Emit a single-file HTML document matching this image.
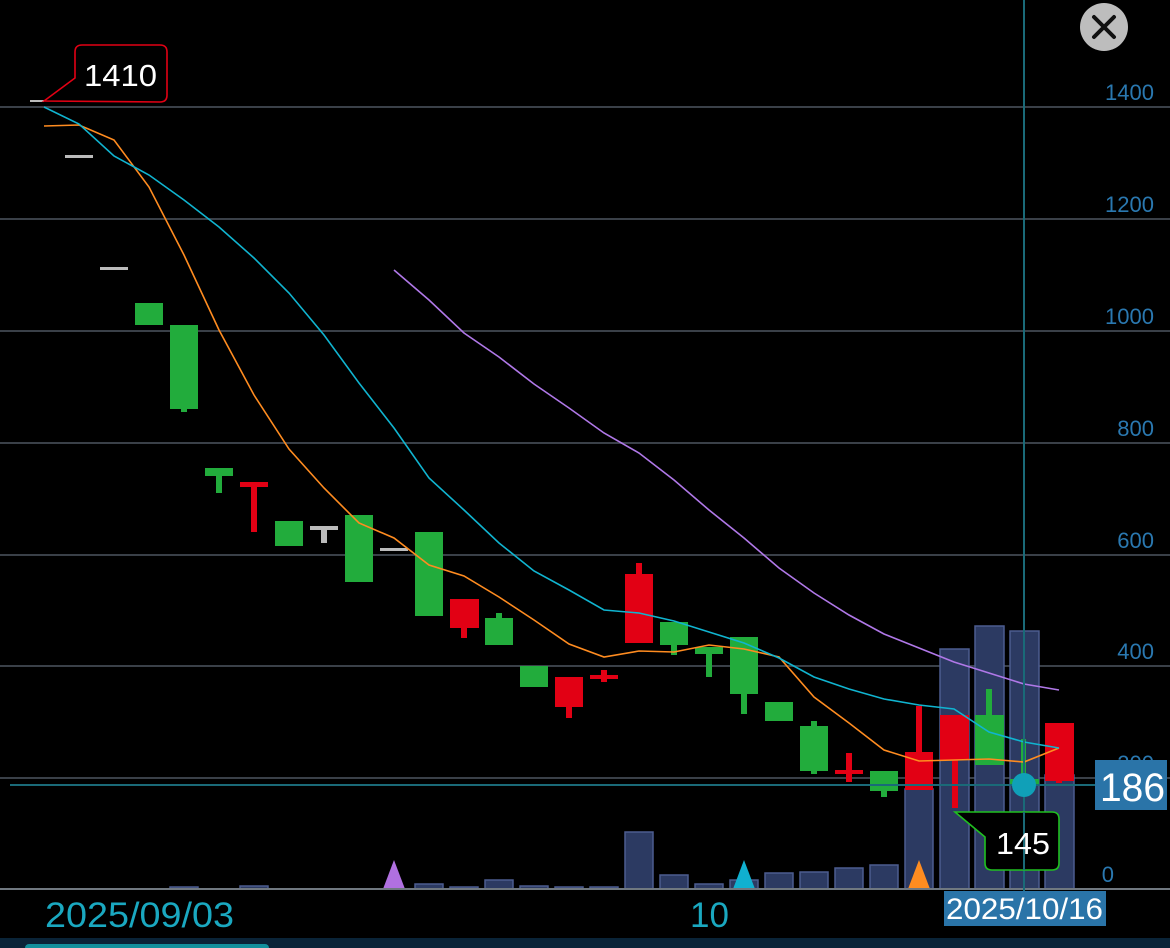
<!DOCTYPE html><html><head><meta charset="utf-8"><style>html,body{margin:0;padding:0;background:#000;overflow:hidden}svg{display:block}text{font-family:"Liberation Sans",sans-serif}</style></head><body>
<svg width="1170" height="948" viewBox="0 0 1170 948">
<rect width="1170" height="948" fill="#000"/>
<g stroke="#3a4048" stroke-width="2">
<line x1="0" y1="107" x2="1170" y2="107"/><line x1="0" y1="219" x2="1170" y2="219"/><line x1="0" y1="331" x2="1170" y2="331"/><line x1="0" y1="443" x2="1170" y2="443"/><line x1="0" y1="555" x2="1170" y2="555"/><line x1="0" y1="666" x2="1170" y2="666"/><line x1="0" y1="778" x2="1170" y2="778"/></g>
<g font-size="22" text-anchor="end">
<text x="1154" y="100" fill="#2a78b0">1400</text><text x="1154" y="212" fill="#2a78b0">1200</text><text x="1154" y="324" fill="#2a78b0">1000</text><text x="1154" y="436" fill="#2a78b0">800</text><text x="1154" y="548" fill="#2a78b0">600</text><text x="1154" y="659" fill="#2a78b0">400</text><text x="1154" y="771" fill="#2a78b0">200</text><text x="1114" y="882" fill="#2a78b0">0</text></g>
<g fill="#2c3a62" stroke="#4c5c90" stroke-width="1.5">
<rect x="170" y="887" width="28" height="2"/><rect x="240" y="886" width="28" height="3"/><rect x="415" y="884" width="28" height="5"/><rect x="450" y="887" width="28" height="2"/><rect x="485" y="880" width="28" height="9"/><rect x="520" y="886" width="28" height="3"/><rect x="555" y="887" width="28" height="2"/><rect x="590" y="887" width="28" height="2"/>
<rect x="625" y="832" width="28" height="57"/><rect x="660" y="875" width="28" height="14"/><rect x="695" y="884" width="28" height="5"/><rect x="730" y="880" width="28" height="9"/><rect x="765" y="873" width="28" height="16"/><rect x="800" y="872" width="28" height="17"/><rect x="835" y="868" width="28" height="21"/><rect x="870" y="865" width="28" height="24"/>
<rect x="905" y="789" width="28" height="100"/><rect x="940" y="649" width="29" height="240"/><rect x="975" y="626" width="29" height="263"/><rect x="1010" y="631" width="29" height="258"/><rect x="1045" y="775" width="29" height="114"/></g>
<polygon points="383,889 394,860 405,889" fill="#b070e0"/><polygon points="733,889 744,860 755,889" fill="#10b0d0"/><polygon points="908,889 919,860 930,889" fill="#ff8c20"/>
<line x1="0" y1="889" x2="1170" y2="889" stroke="#707880" stroke-width="2"/>
<g fill="#bbb"><rect x="30" y="100" width="14" height="2"/><rect x="65" y="155" width="28" height="3"/><rect x="100" y="267" width="28" height="3"/><rect x="310" y="526" width="28" height="4"/><rect x="321" y="526" width="6" height="17"/><rect x="380" y="548" width="28" height="3"/></g>
<g fill="#22ac3c">
<rect x="135" y="303" width="28" height="22"/><rect x="170" y="325" width="28" height="84"/><rect x="181" y="405" width="6" height="7"/>
<rect x="205" y="468" width="28" height="8"/><rect x="216" y="468" width="6" height="25"/>
<rect x="275" y="521" width="28" height="25"/><rect x="345" y="515" width="28" height="67"/><rect x="415" y="532" width="28" height="84"/>
<rect x="485" y="618" width="28" height="27"/><rect x="496" y="613" width="6" height="8"/><rect x="520" y="666" width="28" height="21"/>
<rect x="660" y="622" width="28" height="23"/><rect x="671" y="640" width="6" height="15"/><rect x="695" y="647" width="28" height="7"/><rect x="706" y="647" width="6" height="30"/>
<rect x="730" y="637" width="28" height="57"/><rect x="741" y="690" width="6" height="24"/><rect x="765" y="702" width="28" height="19"/>
<rect x="800" y="726" width="28" height="45"/><rect x="811" y="721" width="6" height="53"/><rect x="870" y="771" width="28" height="20"/><rect x="881" y="785" width="6" height="12"/>
<rect x="975" y="715" width="29" height="50"/><rect x="986" y="689" width="6" height="30"/><rect x="1021" y="739" width="5" height="46"/><rect x="1010" y="779" width="29" height="6"/></g>
<g fill="#e20014">
<rect x="240" y="482" width="28" height="5"/><rect x="251" y="482" width="6" height="50"/>
<rect x="450" y="599" width="29" height="29"/><rect x="461" y="620" width="6" height="18"/><rect x="555" y="677" width="28" height="30"/><rect x="566" y="700" width="6" height="18"/>
<rect x="590" y="675" width="28" height="4"/><rect x="601" y="670" width="6" height="12"/>
<rect x="625" y="574" width="28" height="69"/><rect x="636" y="563" width="6" height="15"/>
<rect x="835" y="770" width="28" height="4"/><rect x="846" y="753" width="6" height="29"/>
<rect x="905" y="752" width="28" height="38"/><rect x="916" y="706" width="6" height="50"/>
<rect x="940" y="715" width="29" height="45"/><rect x="952" y="755" width="6" height="53"/>
<rect x="1045" y="723" width="29" height="58"/><rect x="1056" y="775" width="6" height="8"/></g>
<polyline fill="none" stroke="#ff8c20" stroke-width="1.6" points="44,126 79,125 114,140 149,187 184,255 219,330 254,395 289,449 324,488 359,523 394,538 429,565 464,576 499,597 534,620 569,644 604,657 639,651 674,652 709,645 744,649 779,657 814,697 849,723 884,750 919,761 954,760 989,759 1024,762 1059,748"/>
<polyline fill="none" stroke="#10b4d0" stroke-width="1.6" points="44,107 79,124 114,156 149,175 184,200 219,227 254,258 289,293 324,335 359,383 394,428 429,478 464,510 499,543 534,571 569,590 604,610 639,613 674,621 709,632 744,643 779,658 814,677 849,689 884,699 919,705 954,709 989,732 1024,742 1059,748"/>
<polyline fill="none" stroke="#b078e8" stroke-width="1.6" points="394,270 429,300 464,333 499,357 534,384 569,408 604,433 639,453 674,480 709,510 744,538 779,568 814,593 849,615 884,634 919,648 954,662 989,673 1024,684 1059,690"/>
<line x1="1024" y1="0" x2="1024" y2="892" stroke="#1a6a78" stroke-width="2"/>
<line x1="10" y1="785" x2="1095" y2="785" stroke="#1a6a78" stroke-width="2"/>
<circle cx="1024" cy="785" r="12" fill="#10a0b8"/>
<rect x="1095" y="760" width="72" height="50" fill="#2a74a8"/><text x="1100" y="801" font-size="40" fill="#fff" textLength="65" lengthAdjust="spacingAndGlyphs">186</text>
<path d="M44,101 L75,78 L75,52 Q75,45 82,45 L160,45 Q167,45 167,52 L167,95 Q167,102 160,102 Z" fill="#000" stroke="#e20014" stroke-width="1.6"/>
<text x="84" y="86" font-size="31" fill="#fff" textLength="73" lengthAdjust="spacingAndGlyphs">1410</text>
<path d="M955,812 L1052,812 Q1059,812 1059,819 L1059,863 Q1059,870 1052,870 L992,870 Q985,870 985,863 L985,837 Z" fill="#000" stroke="#20c020" stroke-width="1.6"/>
<line x1="1024" y1="812" x2="1024" y2="870" stroke="#1a6a78" stroke-width="2"/>
<text x="996" y="854" font-size="31" fill="#fff" textLength="54" lengthAdjust="spacingAndGlyphs">145</text>
<text x="45" y="927" font-size="35" fill="#1aa8c0" textLength="189" lengthAdjust="spacingAndGlyphs">2025/09/03</text>
<text x="690" y="927" font-size="35" fill="#1aa8c0">10</text>
<rect x="944" y="891" width="162" height="35" fill="#2a74a8"/><text x="946" y="919" font-size="30" fill="#fff" textLength="157" lengthAdjust="spacingAndGlyphs">2025/10/16</text>
<rect x="0" y="938" width="1170" height="10" fill="#0a2438"/><rect x="25" y="944" width="244" height="8" rx="4" fill="#12909c"/>
<circle cx="1104" cy="27" r="24" fill="#bdbdbd"/><path d="M1094,17 L1114,37 M1114,17 L1094,37" stroke="#111" stroke-width="4" stroke-linecap="round"/>
</svg></body></html>
